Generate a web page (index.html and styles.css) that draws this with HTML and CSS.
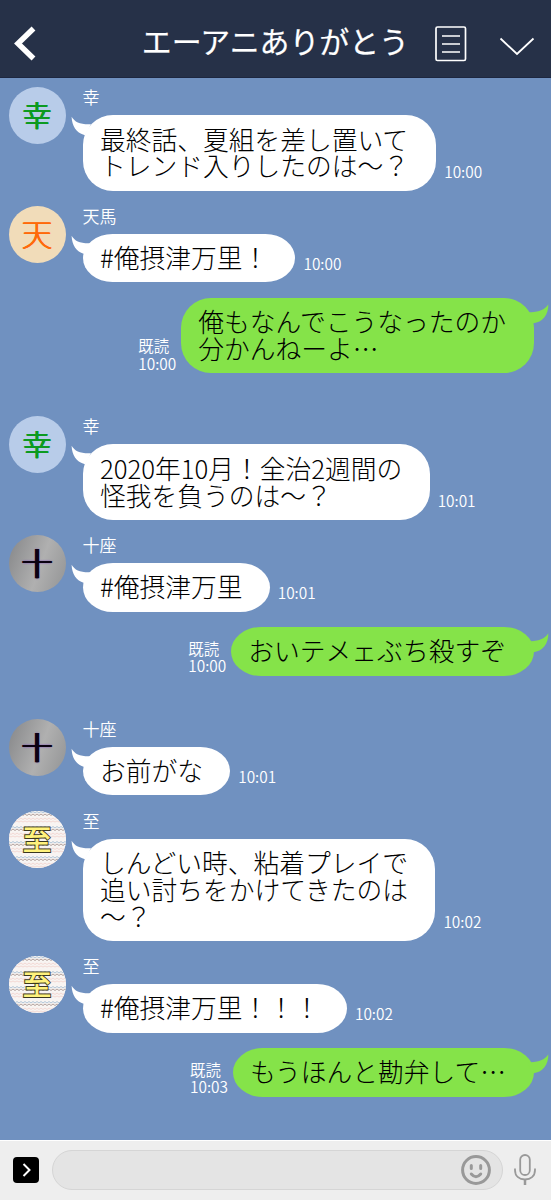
FILE: index.html
```
<!DOCTYPE html>
<html lang="ja">
<head>
<meta charset="utf-8">
<title>エーアニありがとう</title>
<link rel="stylesheet" href="styles.css">
</head>
<body>
<svg class="defs" width="0" height="0" aria-hidden="true">
  <defs>
    <symbol id="tail-in" viewBox="0 0 22 20"><path d="M.6.7C4 6.200 9 8.600 20 8.200L14 19.300L12 18.600C5.500 16 1 10.500.6.7Z"/></symbol>
    <symbol id="tail-out" viewBox="0 0 22 20"><path d="M21.300.3C18 5.800 12 8.300 1 8.300L4 17.800L6.500 19.200C15 18.500 21.800 11 21.300.3Z"/></symbol>
    <pattern id="knit" width="4" height="15" patternUnits="userSpaceOnUse">
      <rect width="4" height="15" fill="#f8f4f2"/>
      <g fill="none" stroke-width="1">
        <path stroke="#b3a19c" d="M0 3L2 4.500L4 3"/>
        <path stroke="#f3d8d4" d="M0 7L2 8.500L4 7M0 10L2 11L4 10"/>
        <path stroke="#b0c6d8" d="M0 .5L2 2L4 .5"/>
      </g>
    </pattern>
  </defs>
</svg>
<div class="app">
  <header class="header">
    <svg class="back" viewBox="0 0 22 36"><path d="M19.500 2.500L4 17.500L19.500 32.500"/></svg>
    <h1 class="title">エーアニありがとう</h1>
    <svg class="note" viewBox="0 0 32 36"><rect x="1" y="1" width="29.500" height="33.500" rx="1.500"/><path d="M7 10H25M7 18H25M7 26H25"/></svg>
    <svg class="down" viewBox="0 0 36 20"><path d="M1.500 1.500L18 17L34.500 1.500"/></svg>
  </header>

  <main class="chat">
    <section class="row">
      <div class="avatar yuki">幸</div>
      <div class="body"><div class="name">幸</div><div class="line"><div class="bubble multi"><svg class="tail"><use href="#tail-in"/></svg>最終話、夏組を差し置いて<br>トレンド入りしたのは～？</div><time class="meta">10:00</time></div></div>
    </section>
    <section class="row">
      <div class="avatar tenma">天</div>
      <div class="body"><div class="name">天馬</div><div class="line"><div class="bubble"><svg class="tail"><use href="#tail-in"/></svg>#俺摂津万里！</div><time class="meta">10:00</time></div></div>
    </section>
    <section class="row mine">
      <div class="meta">既読<br>10:00</div><div class="bubble multi"><svg class="tail"><use href="#tail-out"/></svg>俺もなんでこうなったのか<br>分かんねーよ…</div>
    </section>
    <section class="row">
      <div class="avatar yuki">幸</div>
      <div class="body"><div class="name">幸</div><div class="line"><div class="bubble multi"><svg class="tail"><use href="#tail-in"/></svg>2020年10月！全治2週間の<br>怪我を負うのは～？</div><time class="meta">10:01</time></div></div>
    </section>
    <section class="row">
      <div class="avatar juza">十</div>
      <div class="body"><div class="name">十座</div><div class="line"><div class="bubble"><svg class="tail"><use href="#tail-in"/></svg>#俺摂津万里</div><time class="meta">10:01</time></div></div>
    </section>
    <section class="row mine">
      <div class="meta">既読<br>10:00</div><div class="bubble"><svg class="tail"><use href="#tail-out"/></svg>おいテメェぶち殺すぞ</div>
    </section>
    <section class="row">
      <div class="avatar juza">十</div>
      <div class="body"><div class="name">十座</div><div class="line"><div class="bubble"><svg class="tail"><use href="#tail-in"/></svg>お前がな</div><time class="meta">10:01</time></div></div>
    </section>
    <section class="row">
      <div class="avatar itaru"><svg class="knit" viewBox="0 0 57 57"><rect width="57" height="57" fill="url(#knit)"/></svg><span class="glyph">至</span></div>
      <div class="body"><div class="name">至</div><div class="line"><div class="bubble multi"><svg class="tail"><use href="#tail-in"/></svg>しんどい時、粘着プレイで<br>追い討ちをかけてきたのは<br>～？</div><time class="meta">10:02</time></div></div>
    </section>
    <section class="row">
      <div class="avatar itaru"><svg class="knit" viewBox="0 0 57 57"><rect width="57" height="57" fill="url(#knit)"/></svg><span class="glyph">至</span></div>
      <div class="body"><div class="name">至</div><div class="line"><div class="bubble"><svg class="tail"><use href="#tail-in"/></svg>#俺摂津万里！！！</div><time class="meta">10:02</time></div></div>
    </section>
    <section class="row mine">
      <div class="meta">既読<br>10:03</div><div class="bubble"><svg class="tail"><use href="#tail-out"/></svg>もうほんと勘弁して…</div>
    </section>
  </main>

  <footer class="footer">
    <svg class="expand" viewBox="0 0 26 26"><rect width="26" height="26" rx="4"/><path d="M10.500 7L16.500 13L10.500 19"/></svg>
    <div class="input">
      <svg class="smile" viewBox="0 0 30 30"><circle cx="15" cy="15" r="13.400"/><path d="M10.300 10.500V13.500M19.700 10.500V13.500M10.300 19Q15 24.500 19.700 19"/></svg>
    </div>
    <svg class="mic" viewBox="0 0 22 32"><rect x="6.200" y="1" width="9.600" height="20" rx="4.800"/><path d="M1 14.500V16C1 22.500 5.500 25.500 11 25.500S21 22.500 21 16V14.500"/><path class="stem" d="M11 26V31"/></svg>
  </footer>
</div>
</body>
</html>
```
FILE: styles.css
```
* { box-sizing: border-box; }
body { margin: 0; font-family: "Noto Sans CJK JP", sans-serif; }
svg { display: block; flex: none; }
.defs { position: absolute; }
.app { width: 551px; height: 1200px; display: flex; flex-direction: column; overflow: hidden; background: #7091c0; }

.header { height: 78px; flex: none; display: flex; align-items: center; padding: 10px 16px 0 14px; background: #263148; border-bottom: 1px solid #1d2740; }
.header svg { fill: none; stroke: #fff; }
.back { width: 22px; height: 36px; stroke-width: 5.5; }
.title { margin: 0 26px 0 auto; padding-bottom: 7px; font-size: 29.900px; font-weight: 400; -webkit-text-stroke: .2px #fff; line-height: 40px; color: #fff; white-space: nowrap; }
.note { width: 32px; height: 36px; margin-right: 32px; stroke-width: 1.7; }
.down { width: 36px; height: 20px; margin-top: 6px; stroke-width: 1.8; }

.chat { flex: 1; display: flex; flex-direction: column; gap: 15.150px; padding: 9.100px 17px 0 8.500px; }
.row { display: flex; align-items: flex-start; flex: none; }
.avatar { position: relative; width: 57px; height: 57px; flex: none; overflow: hidden; border-radius: 50%; font-size: 29px; line-height: 54px; text-align: center; }
.yuki { background: #b8cce9; color: #0b9a20; font-weight: 350; text-shadow: .6px 0 #0b9a20, -.6px 0 #0b9a20; }
.tenma { background: #f1dcb9; color: #ff6a0a; font-size: 31px; font-weight: 300; text-shadow: .6px 0 #ff6a0a, -.6px 0 #ff6a0a; }
.juza { background: linear-gradient(110deg, #858688, #b0b0b0 55%, #929394); color: #0b0212; font-size: 31px; font-weight: 350; text-shadow: 1px 0 #0b0212, -1px 0 #0b0212, 0 0 2px #7a3fc0; }
.itaru { background: #f4f2f0; color: #fff27c; }
.knit { position: absolute; inset: 0; width: 57px; height: 57px; }
.glyph { position: relative; font-weight: 500; -webkit-text-stroke: 1.800px #3a3720; paint-order: stroke fill; }

.body { padding-left: 17px; }
.name { height: 28px; font-size: 17px; line-height: 20px; color: #fff; font-weight: 350; }
.line { display: flex; align-items: flex-end; gap: 8px; }
.bubble { position: relative; flex: none; padding: 10.500px 27.300px 11.500px 17.400px; border-radius: 30px / 24.400px; background: #fff; color: #000; font-size: 25.750px; font-weight: 300; line-height: 26.750px; white-space: nowrap; }
.multi { border-radius: 30px; }
.tail { position: absolute; left: -11.500px; top: 1px; width: 22px; height: 20px; fill: #fff; }
.meta { color: #fff; font-size: 15.400px; line-height: 17.500px; padding-bottom: 10px; font-weight: 350; white-space: nowrap; }

.mine { justify-content: flex-end; align-items: flex-end; gap: 5px; margin-bottom: 28px; }
.mine .bubble { background: #85e349; padding-left: 17px; padding-right: 28px; }
.mine .meta { padding-bottom: 1px; }
.mine .tail { left: auto; right: -15px; top: 6px; fill: #85e349; }

.footer { height: 60px; flex: none; display: flex; align-items: center; padding: 0 15px 1px 13px; background: #eee; border-top: 1px solid #fff; }
.expand { width: 26px; height: 26px; }
.expand path { fill: none; stroke: #fff; stroke-width: 2; }
.input { width: 451px; height: 40px; margin-left: 13px; display: flex; justify-content: flex-end; align-items: center; padding-right: 11px; border: 1px solid #d5d5d5; border-radius: 20px; background: #e4e4e4; }
.smile { width: 30px; height: 30px; fill: none; stroke: #999; stroke-width: 3; stroke-linecap: round; }
.mic { width: 22px; height: 32px; margin-left: 11px; fill: none; stroke: #999; stroke-width: 1.8; }
.stem { stroke-width: 2.500; }
```
